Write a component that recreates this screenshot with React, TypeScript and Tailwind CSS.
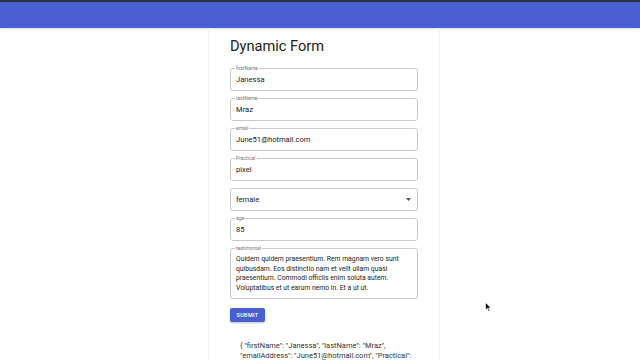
import React from 'react';

type FieldProps = { label?: string; value: string; select?: boolean };

function Field({ label, value, select }: FieldProps) {
  return (
    <div className="relative mb-[7px] flex h-[23px] items-center rounded-[3px] border border-[#c9c9c9] px-[5px]">
      {label && (
        <span className="absolute -top-[4px] left-[4px] bg-white px-[1px] text-[5px] leading-[6px] text-[#7a7a7a]">
          {label}
        </span>
      )}
      <span className="flex-1 text-[7.6px] leading-[10px] text-[#222]">{value}</span>
      {select && (
        <svg width="5" height="3" viewBox="0 0 5 3" className="mr-[1px]">
          <path d="M0 0 L5 0 L2.5 3 Z" fill="#555" />
        </svg>
      )}
    </div>
  );
}

const testimonial = [
  'Quidem quidem praesentium. Rem magnam vero sunt',
  'quibusdam. Eos distinctio nam et velit ullam quasi',
  'praesentium. Commodi officiis enim soluta autem.',
  'Voluptatibus et ut earum nemo in. Et a ut ut.',
];

const jsonLines = [
  '{ "firstName": "Janessa", "lastName": "Mraz",',
  '"emailAddress": "June51@hotmail.com", "Practical":',
];

export default function App() {
  return (
    <div className="relative h-[360px] w-[640px] overflow-hidden bg-white font-['Roboto',sans-serif]">
      <header className="h-[28px] border-t-2 border-[#2b3040] bg-[#4a60d2] shadow-[0_1px_2px_rgba(0,0,0,0.15)]" />
      <main className="ml-[208px] h-[332px] w-[232px] border-x border-[#efefef] px-[21px] pt-[6px]">
        <h1 className="text-[14.6px] leading-[24px] text-[#222]">Dynamic Form</h1>
        <div className="mt-[10px]">
          <Field label="firstName" value="Janessa" />
          <Field label="lastName" value="Mraz" />
          <Field label="email" value="June51@hotmail.com" />
          <Field label="Practical" value="pixel" />
          <Field value="female" select />
          <Field label="age" value="85" />
          <div className="relative h-[51px] rounded-[3px] border border-[#c9c9c9] px-[5px] pt-[6px]">
            <span className="absolute -top-[4px] left-[4px] bg-white px-[1px] text-[5px] leading-[6px] text-[#7a7a7a]">
              testimonial
            </span>
            {testimonial.map((line) => (
              <div key={line} className="whitespace-nowrap text-[6.8px] leading-[9.6px] text-[#222]">
                {line}
              </div>
            ))}
          </div>
        </div>
        <button className="mt-[9px] flex h-[14px] w-[35px] items-center justify-center rounded-[2px] bg-[#4a60d2] text-[5.5px] font-medium tracking-[0.3px] text-white shadow-[0_1px_2px_rgba(0,0,0,0.25)]">
          SUBMIT
        </button>
        <div className="mt-[19px] pl-[10px]">
          {jsonLines.map((line) => (
            <div key={line} className="whitespace-nowrap text-[7.5px] leading-[10px] text-[#333]">
              {line}
            </div>
          ))}
        </div>
      </main>
      <svg className="absolute left-[485px] top-[302px]" width="7" height="10" viewBox="0 0 7 10">
        <path d="M0.5 0.5 L0.5 8 L2.3 6.3 L3.6 9.3 L4.8 8.8 L3.5 5.9 L6 5.9 Z" fill="#111" stroke="#fff" strokeWidth="0.6" />
      </svg>
    </div>
  );
}
